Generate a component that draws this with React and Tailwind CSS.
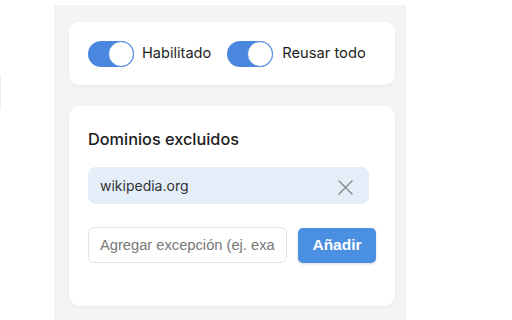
import React from "react";

function Toggle() {
  return (
    <div className="flex h-[26px] w-[46px] items-center justify-end rounded-full bg-[#4a88df]">
      <div className="h-[26px] w-[26px] rounded-full border-[1.5px] border-[#4a88df] bg-white" />
    </div>
  );
}

export default function App() {
  return (
    <div className="relative h-[320px] w-[512px] overflow-hidden bg-white font-['Inter',sans-serif]">
      <div className="absolute left-0 top-[75px] h-[35px] w-px bg-[#eeeeee]" />
      <div className="ml-[54px] mt-[5px] flex h-[315px] w-[352px] flex-col gap-[21px] bg-[#f3f4f6] px-[15px] pt-[17px]">
        <div className="flex h-[63px] w-[326px] items-center rounded-[10px] bg-white px-[19px] shadow-[0_1px_3px_rgba(0,0,0,0.06)]">
          <Toggle />
          <span className="ml-[8px] text-[14.6px] text-[#1e1e1e]">Habilitado</span>
          <div className="ml-[16px]">
            <Toggle />
          </div>
          <span className="ml-[9px] text-[14.7px] text-[#1e1e1e]">Reusar todo</span>
        </div>
        <div className="flex h-[200px] w-[326px] flex-col rounded-[10px] bg-white px-[19px] pt-[22px] shadow-[0_1px_3px_rgba(0,0,0,0.06)]">
          <div className="text-[16.3px] font-medium leading-[22px] text-[#1c1c1c]">Dominios excluidos</div>
          <div className="mt-[17px] flex h-[37px] w-[281px] items-center justify-between rounded-[8px] bg-[#e4eef9] pl-[12px] pr-[16px]">
            <span className="text-[14px] text-[#333]">wikipedia.org</span>
            <svg width="15" height="15" viewBox="0 0 15 15" className="mt-[3px]">
              <path d="M1 1 L14 14 M14 1 L1 14" stroke="#888" strokeWidth="1.4" strokeLinecap="round" />
            </svg>
          </div>
          <div className="mt-[23px] flex items-center gap-[11px]">
            <div className="flex h-[36px] w-[199px] items-center overflow-hidden rounded-[6px] border border-[#e2e2e2] px-[11px]">
              <span className="whitespace-nowrap font-['Liberation_Sans',sans-serif] text-[14.7px] text-[#777]">Agregar excepción (ej. exa</span>
            </div>
            <div className="flex h-[35px] w-[78px] items-center justify-center rounded-[5px] bg-[#4a8fe2] font-['Liberation_Sans',sans-serif] text-[15.5px] font-bold text-white shadow-[0_1px_3px_rgba(0,0,0,0.15)]">
              Añadir
            </div>
          </div>
        </div>
      </div>
    </div>
  );
}
